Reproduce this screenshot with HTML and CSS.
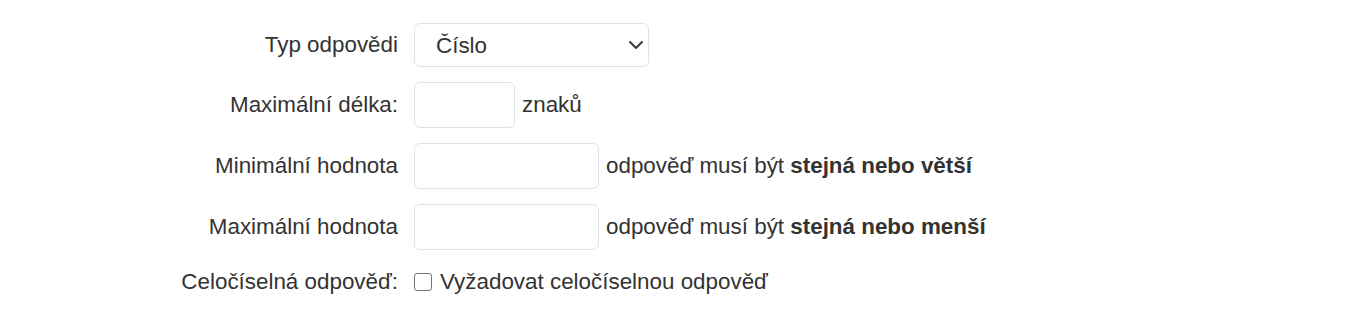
FILE: index.html
```html
<!DOCTYPE html>
<html lang="cs">
<head>
    <meta charset="UTF-8">
    <meta name="viewport" content="width=device-width, initial-scale=1.0">
    <title>Nastavení odpovědi</title>
    <link rel="stylesheet" href="styles.css">
</head>
<body>
    <form class="answer-form">
        <div class="form-row">
            <label class="form-label" for="answerType">Typ odpovědi</label>
            <div class="form-control-wrap">
                <div class="select-wrap">
                    <select id="answerType" class="form-select">
                        <option>Číslo</option>
                        <option>Text</option>
                    </select>
                    <svg class="select-arrow" width="16" height="16" viewBox="0 0 16 16">
                        <path d="M2 5l6 6 6-6" fill="none" stroke="#343a40" stroke-width="2" stroke-linecap="round" stroke-linejoin="round"/>
                    </svg>
                </div>
            </div>
        </div>

        <div class="form-row">
            <label class="form-label" for="maxLength">Maximální délka:</label>
            <div class="form-control-wrap">
                <input type="text" id="maxLength" class="form-input input-short">
                <span class="form-hint">znaků</span>
            </div>
        </div>

        <div class="form-row">
            <label class="form-label" for="minValue">Minimální hodnota</label>
            <div class="form-control-wrap">
                <input type="text" id="minValue" class="form-input input-medium">
                <span class="form-hint">odpověď musí být <strong>stejná nebo větší</strong></span>
            </div>
        </div>

        <div class="form-row">
            <label class="form-label" for="maxValue">Maximální hodnota</label>
            <div class="form-control-wrap">
                <input type="text" id="maxValue" class="form-input input-medium">
                <span class="form-hint">odpověď musí být <strong>stejná nebo menší</strong></span>
            </div>
        </div>

        <div class="form-row row-check">
            <span class="form-label">Celočíselná odpověď:</span>
            <div class="form-control-wrap">
                <label class="check-label">
                    <input type="checkbox" class="form-check">
                    Vyžadovat celočíselnou odpověď
                </label>
            </div>
        </div>
    </form>
</body>
</html>
```

FILE: styles.css
```css
body {
    font-family: 'Liberation Sans', Arial, sans-serif;
    font-size: 22.4px;
    color: #333;
    background: #fff;
    margin: 0;
}

.answer-form {
    padding-top: 23px;
    padding-left: 8px;
}

.form-row {
    display: grid;
    grid-template-columns: 390px auto;
    column-gap: 16px;
    align-items: center;
    margin-bottom: 15px;
}

.form-label {
    text-align: right;
}

.form-control-wrap {
    display: flex;
    align-items: center;
    gap: 7px;
}

.select-wrap {
    position: relative;
    width: 235px;
}

.form-select {
    appearance: none;
    width: 100%;
    height: 44px;
    padding: 0 40px 0 21px;
    font-family: inherit;
    font-size: 22.4px;
    color: #333;
    background: #fff;
    border: 1px solid #dfe2e6;
    border-radius: 6px;
}

.select-arrow {
    position: absolute;
    right: 5px;
    top: 14px;
    pointer-events: none;
}

.form-input {
    box-sizing: border-box;
    height: 46px;
    padding: 6px 12px;
    font-family: inherit;
    font-size: 22.4px;
    border: 1px solid #dfe2e6;
    border-radius: 6px;
}

.input-short {
    width: 101px;
}

.input-medium {
    width: 185px;
}

.form-hint strong {
    font-weight: bold;
}

.row-check {
    margin-top: 19px;
}

.check-label {
    display: flex;
    align-items: center;
    gap: 8px;
}

.form-check {
    appearance: none;
    width: 18px;
    height: 18px;
    margin: 0;
    border: 1px solid #767676;
    border-radius: 3px;
    background: #fff;
}
```
